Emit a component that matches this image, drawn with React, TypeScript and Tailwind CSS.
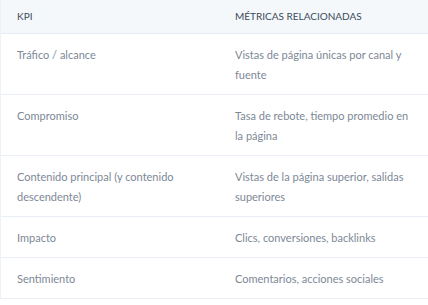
const rows = [
  ["Tráfico / alcance", "Vistas de página únicas por canal y fuente"],
  ["Compromiso", "Tasa de rebote, tiempo promedio en la página"],
  ["Contenido principal (y contenido descendente)", "Vistas de la página superior, salidas superiores"],
  ["Impacto", "Clics, conversiones, backlinks"],
  ["Sentimiento", "Comentarios, acciones sociales"],
]

export default function App() {
  return (
    <div className="min-h-screen bg-white" style={{ fontFamily: "Lato, 'Open Sans', sans-serif" }}>
      <div className="w-[428px] border-l border-[#eef2f7]">

        {/* HEADER */}
        <div className="grid grid-cols-[218px_1fr] h-[34px] items-center bg-[#f5f8fa] border-b border-[#e6ecf3] text-[10px] text-[#3b4a5c] uppercase">
          <div className="pl-4">KPI</div>
          <div className="pl-4">Métricas relacionadas</div>
        </div>

        {/* ROWS */}
        {rows.map(([kpi, metric]) => (
          <div
            key={kpi}
            className="grid grid-cols-[218px_1fr] border-b border-[#e9eef5] text-[11px] leading-[20px] text-[#7d8896]"
          >
            <div className="pl-4 pr-4 pt-[11px] pb-[9px]">{kpi}</div>
            <div className="pl-4 pr-[13px] pt-[11px] pb-[9px]">{metric}</div>
          </div>
        ))}

      </div>
    </div>
  )
}
